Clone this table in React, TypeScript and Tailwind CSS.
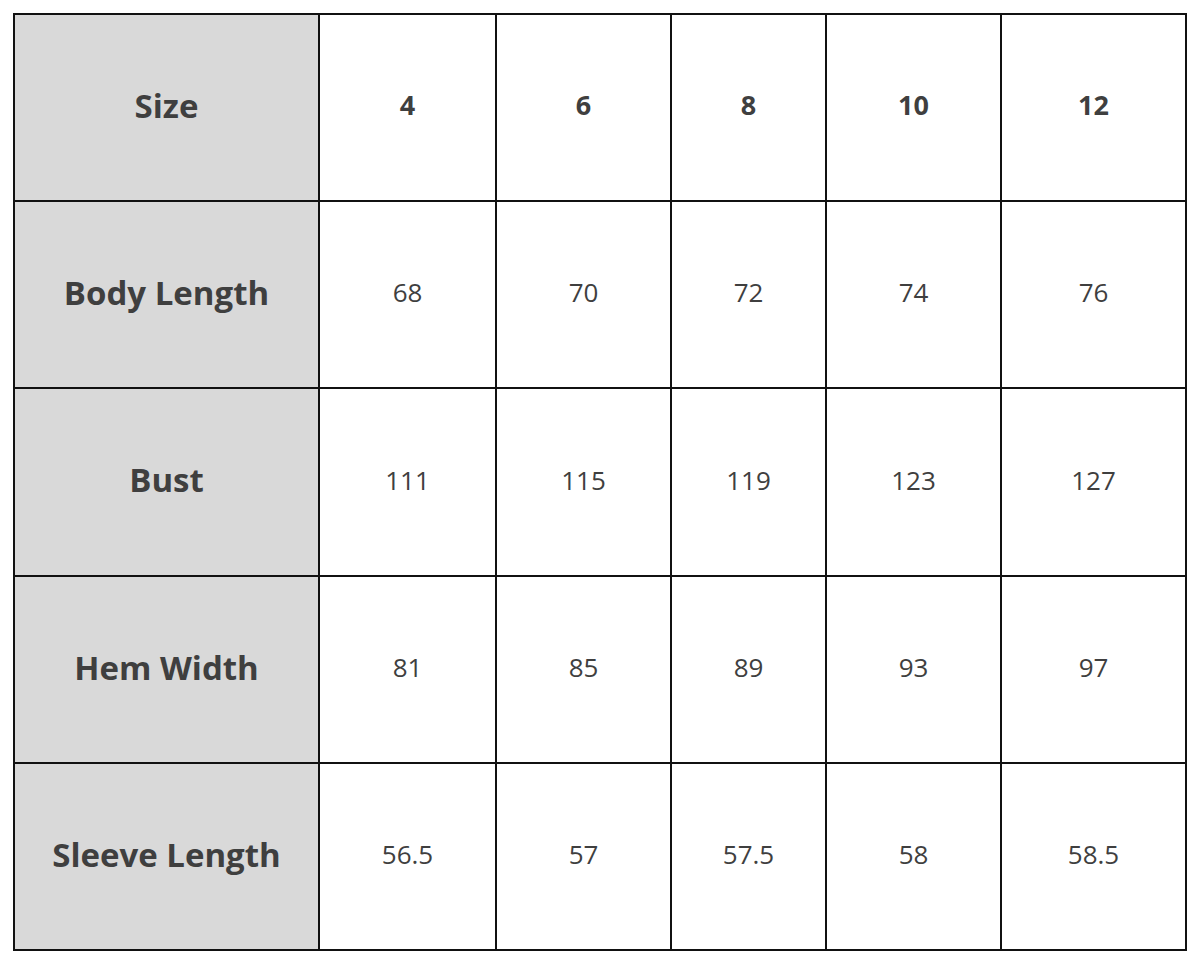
const sizes = ['4', '6', '8', '10', '12']

const rows: { label: string; values: string[] }[] = [
  { label: 'Body Length', values: ['68', '70', '72', '74', '76'] },
  { label: 'Bust', values: ['111', '115', '119', '123', '127'] },
  { label: 'Hem Width', values: ['81', '85', '89', '93', '97'] },
  { label: 'Sleeve Length', values: ['56.5', '57', '57.5', '58', '58.5'] },
]

export default function App() {
  return (
    <div className="w-[1200px] h-[964px] bg-white pt-[13px] pl-[13px]" style={{ fontFamily: '"Open Sans", "Noto Sans", sans-serif' }}>
      <div className="grid grid-cols-[303px_175px_173px_153px_173px_183px] grid-rows-[185px_185px_186px_185px_185px] gap-[2px] p-[2px] bg-[#111] w-[1174px] text-[#3f3f3f]">
        <div className="bg-[#d9d9d9] flex items-center justify-center text-[33px] font-bold pb-[4px]">Size</div>
        {sizes.map(s => (
          <div key={s} className="bg-white flex items-center justify-center text-[27px] font-bold pb-[4px]">{s}</div>
        ))}
        {rows.map(r => (
          <>
            <div key={r.label} className="bg-[#d9d9d9] flex items-center justify-center text-[33px] font-bold pb-[4px]">{r.label}</div>
            {r.values.map((v, i) => (
              <div key={r.label + i} className="bg-white flex items-center justify-center text-[26px] pb-[4px]">{v}</div>
            ))}
          </>
        ))}
      </div>
    </div>
  )
}
